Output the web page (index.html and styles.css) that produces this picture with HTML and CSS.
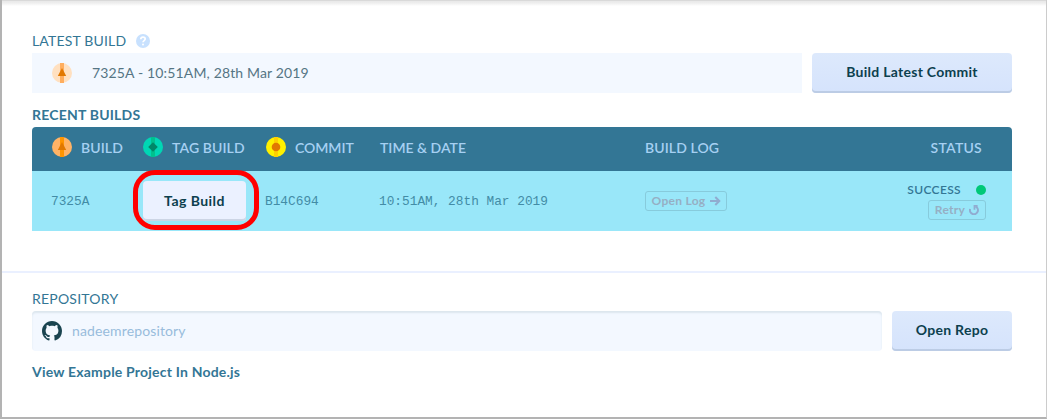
FILE: index.html
```html
<!DOCTYPE html>
<html lang="en">
<head>
<meta charset="utf-8">
<title>Builds</title>
<link rel="stylesheet" href="styles.css">
</head>
<body>
<main class="panel">
  <section class="builds">
    <h2 class="label"><span class="t-latest">LATEST BUILD</span>
      <svg class="help" viewBox="0 0 14 14"><circle cx="7" cy="7" r="7" fill="#c8e1fe"/><path d="M4.800 5.300C4.800 3.900 5.700 3.200 7 3.200s2.200.7 2.200 1.900c0 1.500-2.200 1.500-2.200 3.200" fill="none" stroke="#fff" stroke-width="1.700"/><circle cx="7" cy="10.500" r="1" fill="#fff"/></svg>
    </h2>
    <div class="row">
      <div class="latest">
        <svg class="dot" viewBox="0 0 20 20"><circle cx="10" cy="10" r="10" fill="#ffe0c0"/><path d="M8 0h4v20H8z" fill="#ffae5e"/><path d="M10 5l4.200 8H5.800z" fill="#e17800"/></svg>
        <span class="t-build">7325A - 10:51AM, 28th Mar 2019</span>
      </div>
      <button class="btn btn-commit"><span>Build Latest Commit</span></button>
    </div>
    <h2 class="label strong"><span class="t-recent">RECENT BUILDS</span></h2>
    <div class="table">
      <div class="grid head">
        <div class="cell"><svg class="dot" viewBox="0 0 20 20"><circle cx="10" cy="10" r="10" fill="#ffb366"/><path d="M8 0h4v20H8z" fill="#ff9500"/><path d="M10 5l4.200 8H5.800z" fill="#e17800"/></svg><span>BUILD</span></div>
        <div class="cell"><svg class="dot" viewBox="0 0 20 20"><circle cx="10" cy="10" r="10" fill="#00d6b4"/><path d="M8 0h4v20H8z" fill="#00c08e"/><path d="M10 5.200l4.800 4.800-4.800 4.800L5.200 10z" fill="#008768"/></svg><span>TAG BUILD</span></div>
        <div class="cell"><svg class="dot" viewBox="0 0 20 20"><circle cx="10" cy="10" r="10" fill="#fff000"/><path d="M8 0h4v20H8z" fill="#ffd000"/><circle cx="10" cy="10" r="4.300" fill="#e17800"/></svg><span class="t-commit">COMMIT</span></div>
        <div class="cell"><span class="t-time">TIME &amp; DATE</span></div>
        <div class="cell"><span>BUILD LOG</span></div>
        <div class="cell end"><span class="t-status">STATUS</span></div>
      </div>
      <div class="grid body">
        <div class="cell mono">7325A</div>
        <div class="cell tag-cell"><button class="btn btn-tag"><span>Tag Build</span></button></div>
        <div class="cell mono">B14C694</div>
        <div class="cell mono">10:51AM, 28th Mar 2019</div>
        <div class="cell"><button class="mini mini-log"><span>Open Log</span><svg class="arrow" viewBox="0 0 11 10"><path d="M0 5h9M5.300 1l4 4-4 4" fill="none" stroke="#91acd0" stroke-width="2"/></svg></button></div>
        <div class="status">
          <div class="state"><span>SUCCESS</span><i class="ok"></i></div>
          <button class="mini mini-retry"><span>Retry</span><svg class="retry" viewBox="0 0 10 10"><path d="M1.100 4A4 4 0 1 0 6.500 1.500" fill="none" stroke="#91acd0" stroke-width="2"/><path d="M4.600 0h4v1.700H6.300v3H4.600z" fill="#91acd0"/></svg></button>
        </div>
      </div>
    </div>
  </section>
  <section class="repo">
    <h2 class="label"><span class="t-repo">REPOSITORY</span></h2>
    <div class="row">
      <div class="field">
        <svg class="github" viewBox="0 0 16 16"><path fill="#1a4450" d="M8 0C3.580 0 0 3.580 0 8c0 3.540 2.290 6.530 5.470 7.590.4.070.55-.17.55-.38 0-.19-.01-.82-.01-1.490-2.010.37-2.530-.49-2.690-.94-.09-.23-.48-.94-.82-1.130-.28-.15-.68-.52-.01-.53.63-.01 1.080.58 1.230.82.72 1.210 1.870.87 2.330.66.07-.52.28-.87.51-1.070-1.780-.2-3.640-.89-3.640-3.950 0-.87.31-1.590.82-2.150-.08-.2-.36-1.020.08-2.120 0 0 .67-.21 2.200.82.64-.18 1.320-.27 2-.27s1.360.09 2 .27c1.530-1.040 2.200-.82 2.200-.82.44 1.100.16 1.920.08 2.120.51.56.82 1.270.82 2.150 0 3.070-1.870 3.750-3.650 3.950.29.25.54.73.54 1.480 0 1.070-.01 1.930-.01 2.200 0 .21.15.46.55.38A8.010 8.010 0 0 0 16 8c0-4.420-3.580-8-8-8z"/></svg>
        <span class="t-name">nadeemrepository</span>
      </div>
      <button class="btn btn-repo"><span>Open Repo</span></button>
    </div>
    <a class="link"><span>View Example Project In Node.js</span></a>
  </section>
</main>
</body>
</html>
```
FILE: styles.css
```css
*, *::after { box-sizing: border-box; }
body { margin: 0; font-family: Lato, "Open Sans", sans-serif; font-size: 14px; background: #fff; }
button { font-family: inherit; padding: 0; margin: 0; border: 0; }
svg { display: block; flex: none; }
span { white-space: nowrap; }
.panel { height: 419px; border-left: 2px solid #b3b3b3; border-right: 1px solid #ccc; border-bottom: 2px solid #b3b3b3; background: linear-gradient(#d9d9d9 0 1px, #e9e9e9 1px, #eee 3px, #fff 6px); color: #337695; }
.builds { height: 273px; padding: 31px 34px 0 30px; border-bottom: 2px solid #eaf0ff; }
.label { display: flex; align-items: center; gap: 10px; height: 20px; margin: 0 0 2px; font-size: 14px; font-weight: 400; }
.label span { padding-bottom: 2px; }
.t-latest { letter-spacing: .17px; }
.t-build { letter-spacing: .15px; padding-bottom: 2px; }
.t-recent { letter-spacing: .2px; }
.t-repo { letter-spacing: .22px; }
.t-name { letter-spacing: .13px; padding-bottom: 2px; }
.t-commit { letter-spacing: -.05px; }
.head .t-time { letter-spacing: 0; }
.t-status { letter-spacing: .25px; }
.help { width: 14px; height: 14px; }
.row { display: flex; gap: 10px; height: 40px; }
.latest { flex: 1; display: flex; align-items: center; gap: 20px; padding-left: 20px; background: #f3f8ff; color: #557584; }
.dot { width: 20px; height: 20px; }
.btn { border-radius: 4px; background: linear-gradient(#dde9fc, #d5e3fc); box-shadow: inset 0 -2px #bccce5; color: #0c404e; font-size: 14px; font-weight: 700; letter-spacing: .28px; padding-bottom: 3px; }
.btn-commit { width: 200px; }
.strong { font-weight: 700; margin: 12px 0 2px; }
.table { border-radius: 4px 4px 0 0; overflow: hidden; }
.grid { display: grid; grid-template-columns: 91px 123px 114px 265px 237px 100px; padding-left: 20px; }
.cell { display: flex; align-items: center; }
.head { height: 44px; background: #337695; color: #a6d0f2; font-weight: 600; letter-spacing: .1px; padding-bottom: 4px; }
.head .cell { gap: 9px; }
.head .cell span { padding-top: 1px; }
.head .end { justify-content: flex-end; }
.body { height: 60px; background: #99e7f9; }
.mono { margin-left: -1px; font-family: "Liberation Mono", monospace; font-size: 12.800px; color: #438ca6; white-space: nowrap; }
.tag-cell { position: relative; }
.tag-cell::after { content: ""; position: absolute; left: -10px; top: -1px; width: 126px; height: 60px; border: 5px solid #f00; border-radius: 22px; }
.table { overflow: visible; }
.head { border-radius: 4px 4px 0 0; }
.btn-tag { width: 103px; height: 40px; background: #ebf1ff; box-shadow: inset 0 -2px #ccd5e5; letter-spacing: .45px; padding-bottom: 2px; }
.mini { display: flex; align-items: center; justify-content: center; gap: 4px; height: 20px; border: 1px solid #87cbdc; border-radius: 3px; background: transparent; color: #96afc4; font-size: 12px; font-weight: 700; letter-spacing: .3px; padding-bottom: 1px; }
.mini-log { width: 82px; }
.mini-retry { width: 58px; gap: 4px; }
.arrow { width: 11px; height: 10px; }
.retry { width: 10px; height: 10px; }
.status { display: flex; flex-direction: column; align-items: flex-end; margin-right: -4px; padding-top: 9px; }
.state { display: flex; align-items: center; gap: 15px; height: 20px; font-size: 12px; font-weight: 600; letter-spacing: .35px; }
.state span { padding-bottom: 1px; }
.ok { width: 10px; height: 10px; border-radius: 50%; background: #00c878; }
.repo { padding: 16px 34px 0 30px; }
.field { flex: 1; display: flex; align-items: center; gap: 10px; padding-left: 10px; border-radius: 4px; background: #f3f8ff; box-shadow: inset 0 2px 2px #dce6ee; color: #98bcdc; }
.github { width: 20px; height: 20px; }
.btn-repo { width: 120px; }
.link { display: flex; margin-top: 12px; font-weight: 700; letter-spacing: .2px; }
```
